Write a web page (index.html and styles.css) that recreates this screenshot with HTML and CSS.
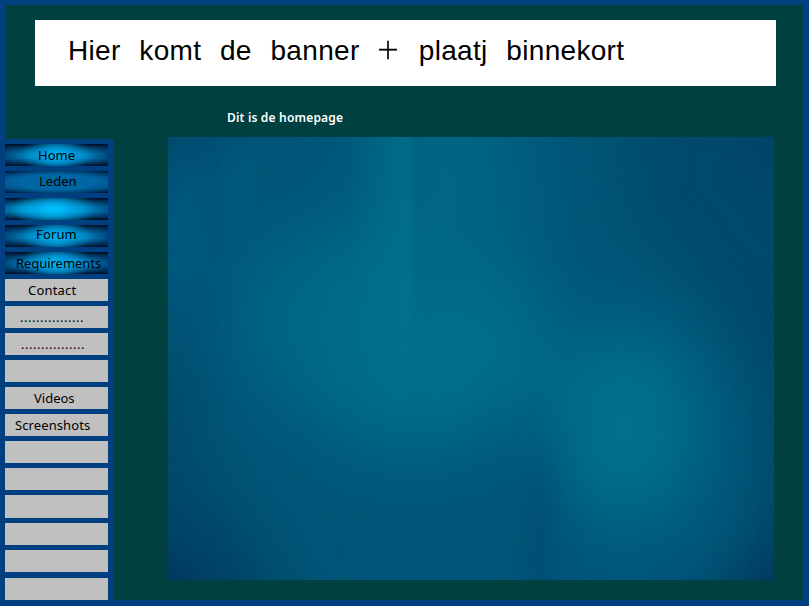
FILE: index.html
```html
<!DOCTYPE html>
<html lang="nl">
<head>
<meta charset="utf-8">
<title>Homepage</title>
<link rel="stylesheet" href="styles.css">
</head>
<body>
<div class="page">
  <header class="top"><h1 class="banner">Hier komt de banner <span class="plus">+</span> plaatj binnekort</h1></header>
  <div class="columns">
    <nav class="menu">
      <a class="item glow home">Home</a>
      <a class="item glow leden">Leden</a>
      <a class="item glow bright"></a>
      <a class="item glow forum">Forum</a>
      <a class="item glow req">Requirements</a>
      <a class="item contact">Contact</a>
      <a class="item dots">................</a>
      <a class="item dots second">................</a>
      <a class="item"></a>
      <a class="item videos">Videos</a>
      <a class="item shots">Screenshots</a>
      <a class="item"></a>
      <a class="item"></a>
      <a class="item tall"></a>
      <a class="item"></a>
      <a class="item"></a>
      <a class="item last"></a>
    </nav>
    <main class="content">
      <h2 class="title">Dit is de homepage</h2>
      <svg class="panel" width="606" height="443" viewBox="0 0 606 443">
        <defs>
          <filter id="b1" x="-100%" y="-100%" width="300%" height="300%"><feGaussianBlur stdDeviation="38"/></filter>
          <filter id="b2" x="-100%" y="-100%" width="300%" height="300%"><feGaussianBlur stdDeviation="13 30"/></filter>
          <linearGradient id="ray" x1="0" x2="1" y1="0" y2="0">
            <stop offset="0" stop-color="#007896" stop-opacity="0"/>
            <stop offset=".85" stop-color="#007896" stop-opacity=".45"/>
            <stop offset="1" stop-color="#007896" stop-opacity="0"/>
          </linearGradient>
          <linearGradient id="ray2" x1="0" x2="1" y1="0" y2="0">
            <stop offset="0" stop-color="#006484" stop-opacity="0"/>
            <stop offset=".9" stop-color="#006484" stop-opacity=".4"/>
            <stop offset="1" stop-color="#006484" stop-opacity="0"/>
          </linearGradient>
          <linearGradient id="fade" x1="0" x2="0" y1="0" y2="1">
            <stop offset="0" stop-color="#fff"/><stop offset=".5" stop-color="#fff"/><stop offset="1" stop-color="#000"/>
          </linearGradient>
          <linearGradient id="fade2" x1="0" x2="0" y1="0" y2="1">
            <stop offset="0" stop-color="#000"/><stop offset=".4" stop-color="#fff"/><stop offset="1" stop-color="#000"/>
          </linearGradient>
          <mask id="m"><rect width="606" height="290" fill="url(#fade)"/></mask>
          <mask id="m2"><rect width="606" height="120" fill="url(#fade2)"/></mask>
        </defs>
        <rect width="606" height="443" fill="#005678"/>
        <g filter="url(#b1)">
          <ellipse cx="245" cy="195" rx="130" ry="120" fill="#006e8b"/>
          <ellipse cx="320" cy="200" rx="60" ry="80" fill="#00708c"/>
          <ellipse cx="280" cy="50" rx="75" ry="120" fill="#006684"/>
          <ellipse cx="458" cy="290" rx="72" ry="98" fill="#00728e"/>
          <ellipse cx="125" cy="180" rx="55" ry="80" fill="#006886"/>
          <path d="M450-60H720V260H600L540 170L460 70Z" fill="#00496c"/>
          <path d="M-60 190L10 210L35 330L120 443V520H-60Z" fill="#00466b"/>
          <path d="M-60-60H60L20 15L-60 60Z" fill="#00436a"/>
          <path d="M575-60H680V60Z" fill="#00265a"/>
          <path d="M-60 390L60 443V510H-60Z" fill="#00305d"/>
          <path d="M596 150H680V500H596Z" fill="#00456a"/>
          <path d="M680 340V520H510L600 420Z" fill="#002f5c"/>
        </g>
        <g filter="url(#b2)">
          <ellipse cx="16" cy="90" rx="12" ry="50" fill="#006586" opacity=".6"/>
          <ellipse cx="28" cy="185" rx="10" ry="40" fill="#004d74" opacity=".6"/>
          <ellipse cx="371" cy="400" rx="13" ry="80" fill="#004a70" opacity=".8"/>
        </g>
        <path d="M176 0H250L246 290H176Z" fill="url(#ray)" mask="url(#m)"/>
        <path d="M30 0H90V120H30Z" fill="url(#ray2)" mask="url(#m2)"/>
      </svg>
    </main>
  </div>
</div>
</body>
</html>
```

FILE: styles.css
```css
* { box-sizing: border-box; }
body { margin: 0; background: #004080; }
.page {
  width: 809px;
  height: 606px;
  padding: 5px 6px 6px 0;
  overflow: hidden;
}
.top {
  height: 134px;
  margin-left: 6px;
  padding: 15px 0 0 29px;
  background: #004040;
}
.banner {
  width: 741px;
  height: 66px;
  margin: 0;
  padding-left: 33px;
  background: #fff;
  color: #000;
  font: 400 28px/61px "Liberation Sans", sans-serif;
  letter-spacing: .32px;
  word-spacing: 10.6px;
  white-space: nowrap;
}
.plus {
  position: relative;
  top: -1px;
  margin: 0 0 0 -2px;
  font: 200 28px/20px "DejaVu Sans", sans-serif;
  -webkit-text-stroke: .5px #000;
}
.columns { display: flex; height: 461px; }
.menu {
  display: flex;
  flex-direction: column;
  gap: 5px;
  width: 114px;
  padding: 5px 6px 0 5px;
}
.item {
  flex: 0 0 22px;
  height: 22px;
  background: #c0c0c0;
  color: #000;
  font: 13px/22px "Noto Sans", sans-serif;
  white-space: nowrap;
}
.glow {
  background:
    radial-gradient(ellipse 34px 20px at 50% 50%, #00b2f0 0, #00a2e4b0 45%, #0090d000 100%),
    linear-gradient(180deg, #000c24 0, #00183880 20%, #00183800 42%, #00183800 62%, #00183880 82%, #000c24 100%),
    linear-gradient(90deg, #00497c 0, #0080bb 22%, #0095d5 50%, #0080bb 78%, #00497c 100%);
}
.leden {
  padding-left: 34px;
  line-height: 21px;
  background:
    radial-gradient(ellipse 75px 15px at 50% 50%, #0068a8 0, #0066a4 50%, #00589000 100%),
    linear-gradient(180deg, #001030 0, #004a80 35%, #004a80 70%, #001030 100%);
}
.bright {
  background:
    radial-gradient(ellipse 42px 20px at 47% 50%, #00c4fc 0, #00a8e8b0 45%, #0090d000 100%),
    linear-gradient(180deg, #000c24 0, #00183880 20%, #00183800 42%, #00183800 62%, #00183880 82%, #000c24 100%),
    linear-gradient(90deg, #0068a0 0, #00a0d8 25%, #009ad8 65%, #005890 100%);
}
.home { padding-left: 33px; }
.forum { padding-left: 31px; line-height: 18px; letter-spacing: .15px; }
.req { padding-left: 11px; letter-spacing: -.05px; }
.contact { padding-left: 23px; letter-spacing: .2px; }
.dots { padding-left: 15px; letter-spacing: .52px; }
.second { padding-left: 16px; }
.videos { padding-left: 29px; }
.shots { padding-left: 10px; letter-spacing: .1px; }
.tall { flex-basis: 23px; }
.last { margin-top: 1px; }
.content {
  flex: 1;
  padding-left: 54px;
  background: #004040;
}
.title {
  height: 29px;
  margin: -31px 0 0 59px;
  color: #fff;
  font: 600 12px/20px "Noto Sans", sans-serif;
  letter-spacing: .18px;
}
.panel { display: block; overflow: hidden; }
```
